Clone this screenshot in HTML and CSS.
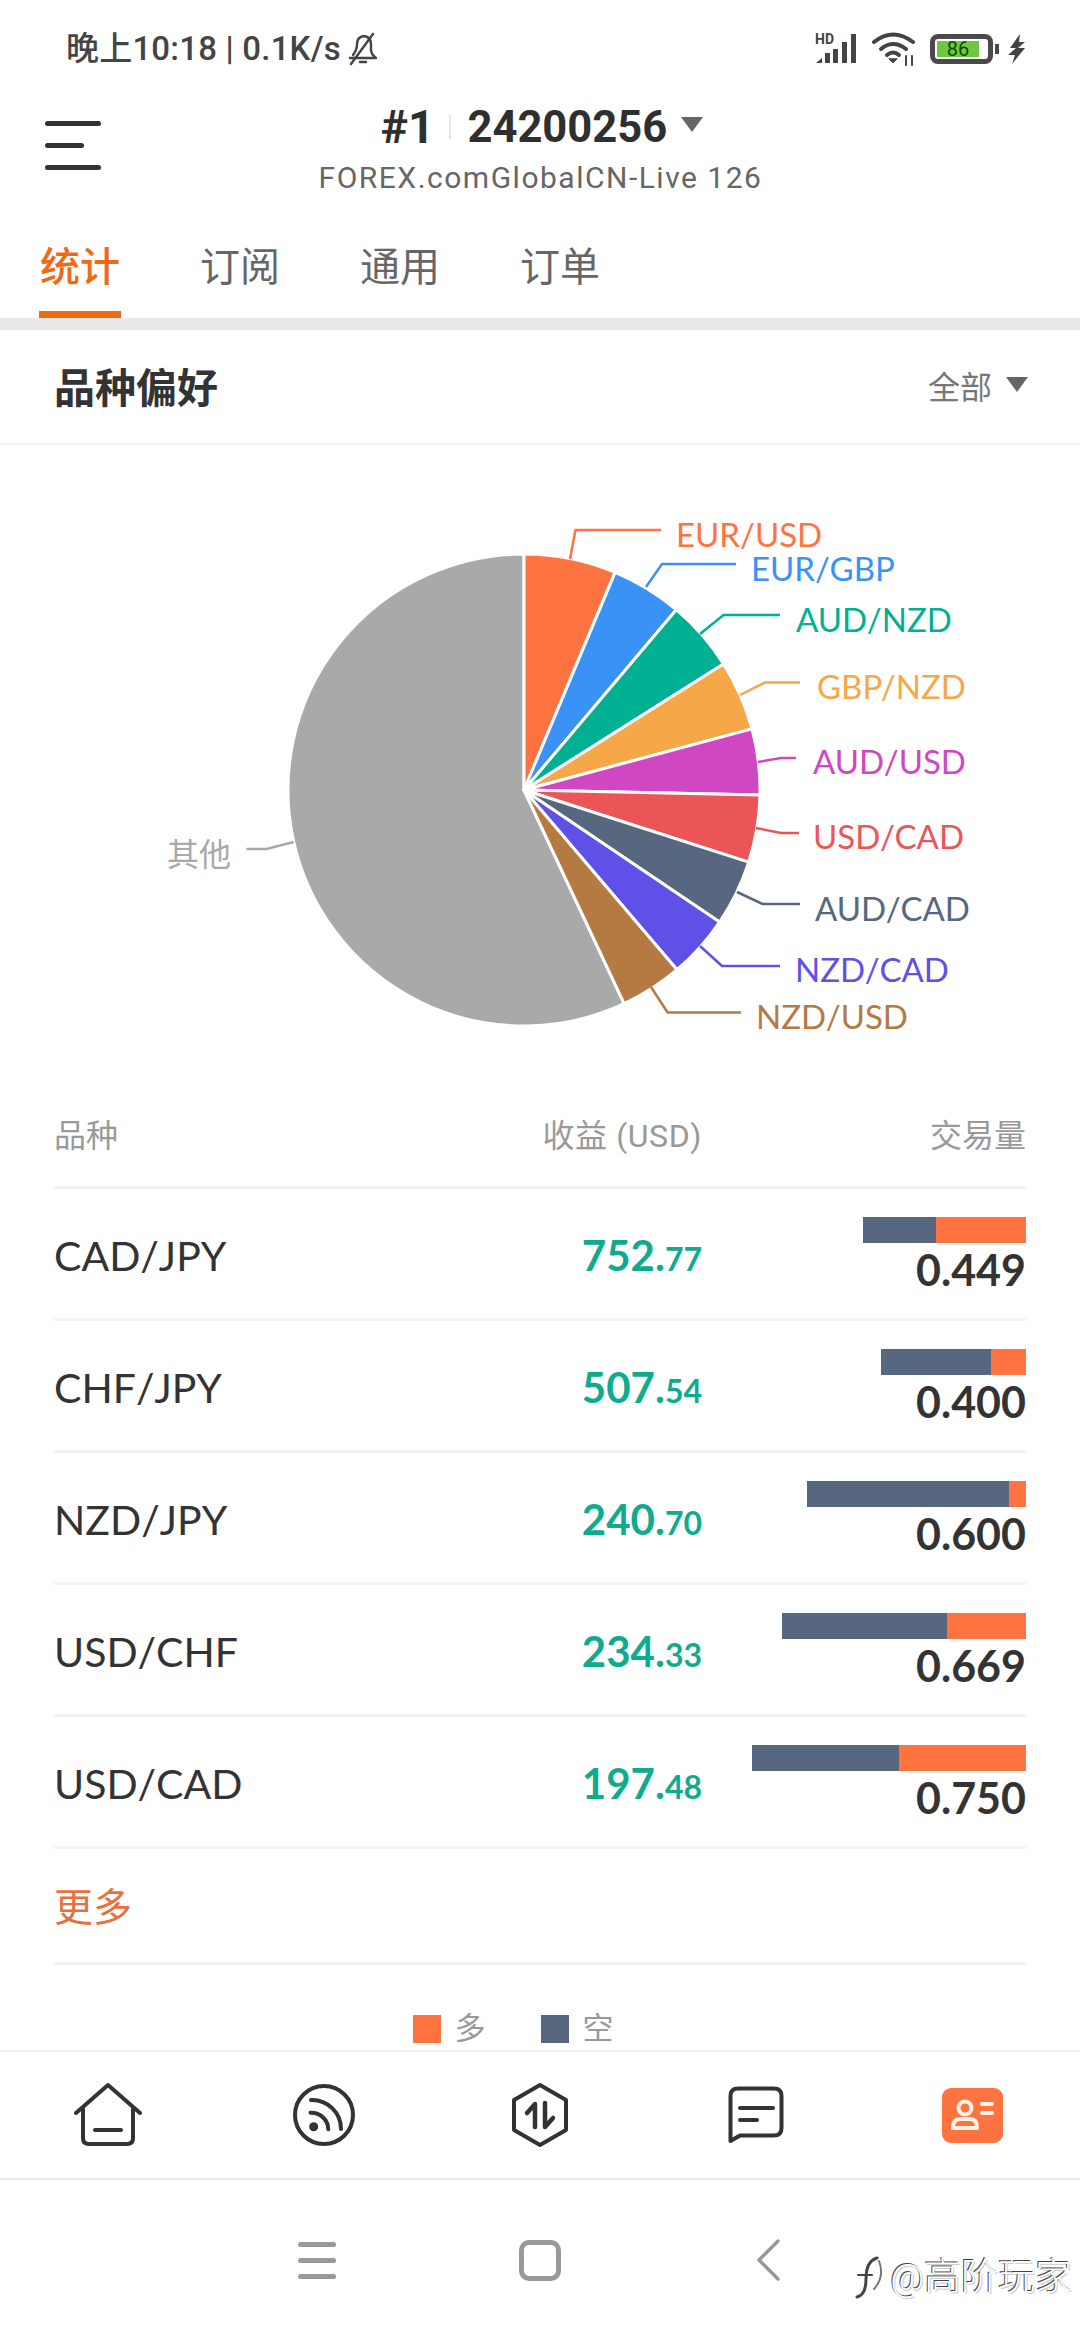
FILE: index.html
```html
<!DOCTYPE html>
<html lang="zh">
<head>
    <meta charset="UTF-8">
    <meta name="viewport" content="width=device-width, initial-scale=1.0">
    <title>品种偏好</title>
    <link rel="stylesheet" href="styles.css">
</head>
<body>
<div class="phone">
    <div class="status-bar">
        <div class="status-left">
            <span>晚上10:18 | 0.1K/s</span>
            <svg class="bell" viewBox="0 0 32 34" fill="none" stroke="#444" stroke-width="2.4" stroke-linecap="round" stroke-linejoin="round">
                <path d="M6 23 Q10 18 10 12 Q10 5 17 4 Q24 5 24 12 V18 Q24 22 29 26 H3"/>
                <path d="M13 30 H19"/>
                <path d="M26 2 L4 32"/>
            </svg>
        </div>
        <div class="status-right">
            <svg class="signal" viewBox="0 0 42 32">
                <text x="0" y="11" class="hd">HD</text>
                <path d="M1 30 L7 25 V30 Z M10 20 H15 V30 H10 Z M18 16 H23 V30 H18 Z M27 9 H32 V30 H27 Z M36 1 H41 V30 H36 Z" fill="#444"/>
            </svg>
            <svg class="wifi" viewBox="0 0 44 34" fill="none" stroke="#444" stroke-width="4" stroke-linecap="round">
                <path d="M2 10 Q21 -5 41 10"/>
                <path d="M9 17 Q21 7 34 17"/>
                <path d="M15 23 Q21 18 27 23"/>
                <path d="M17 27 L21 31 L25 27 Z" fill="#444" stroke-width="1"/>
                <path d="M34 24 V33 M40 24 V33" stroke-width="2"/>
            </svg>
            <div class="battery">
                <div class="battery-body"><span class="battery-fill">86</span></div>
                <div class="battery-nub"></div>
            </div>
            <svg class="bolt" viewBox="0 0 18 30">
                <path d="M12 0 L2 14 L8 14 L0 21 L7 21 L4 30 L17 14 L10 14 L17 8 L11 8 Z" fill="#444"/>
            </svg>
        </div>
    </div>

    <header class="top-bar">
        <div class="menu-btn"><span></span><span class="short"></span><span></span></div>
        <div class="account">
            <div class="account-line">
                <span class="account-rank">#1</span>
                <span class="account-sep"></span>
                <span class="account-no">24200256</span>
                <span class="caret caret-up"></span>
            </div>
            <div class="account-server">FOREX.comGlobalCN-Live 126</div>
        </div>
    </header>

    <nav class="tabs">
        <div class="tab active">统计</div>
        <div class="tab">订阅</div>
        <div class="tab">通用</div>
        <div class="tab">订单</div>
    </nav>
    <div class="band"></div>

    <main class="content">
        <div class="section-head">
            <h2>品种偏好</h2>
            <div class="filter">全部<span class="caret"></span></div>
        </div>

        <svg class="pie" viewBox="0 445 1080 635">
            <g stroke="#fff" stroke-width="3" stroke-linejoin="round">
                <path class="f-grey" d="M524 790 L624.1 1003.7 A236 236 0 1 1 524 554 Z"/>
                <path class="f-orange" d="M524 790 L524 554 A236 236 0 0 1 615.1 572.3 Z"/>
                <path class="f-blue" d="M524 790 L615.1 572.3 A236 236 0 0 1 676.3 609.7 Z"/>
                <path class="f-green" d="M524 790 L676.3 609.7 A236 236 0 0 1 723.5 663.9 Z"/>
                <path class="f-yellow" d="M524 790 L723.5 663.9 A236 236 0 0 1 752 728.9 Z"/>
                <path class="f-magenta" d="M524 790 L752 728.9 A236 236 0 0 1 760 794.9 Z"/>
                <path class="f-red" d="M524 790 L760 794.9 A236 236 0 0 1 748.7 862.1 Z"/>
                <path class="f-slate" d="M524 790 L748.7 862.1 A236 236 0 0 1 719.6 922 Z"/>
                <path class="f-purple" d="M524 790 L719.6 922 A236 236 0 0 1 677 969.7 Z"/>
                <path class="f-brown" d="M524 790 L677 969.7 A236 236 0 0 1 624.1 1003.7 Z"/>
            </g>
            <g fill="none" stroke-width="2.5">
                <path class="s-orange" d="M570 559 L575.5 530 H661"/>
                <path class="s-blue" d="M646 587 L662 564 H736"/>
                <path class="s-green" d="M700 634 L723.5 615 H780"/>
                <path class="s-yellow" d="M740 695 L765 682.5 H800"/>
                <path class="s-magenta" d="M758 762 L781 758 H796"/>
                <path class="s-red" d="M756 828 L781 833 H799"/>
                <path class="s-slate" d="M737 892 L762.5 904 H800"/>
                <path class="s-purple" d="M700 946 L722 966 H780"/>
                <path class="s-brown" d="M651 987 L667.6 1012.5 H741"/>
                <path class="s-grey" d="M293.6 842 L266.5 849 H246.5"/>
            </g>
            <g class="pie-labels">
                <text class="f-orange" x="676" y="547">EUR/USD</text>
                <text class="f-blue" x="751" y="581">EUR/GBP</text>
                <text class="f-green" x="796" y="632">AUD/NZD</text>
                <text class="f-yellow" x="817" y="699">GBP/NZD</text>
                <text class="f-magenta" x="813" y="774">AUD/USD</text>
                <text class="f-red" x="813" y="849">USD/CAD</text>
                <text class="f-slate" x="815" y="921">AUD/CAD</text>
                <text class="f-purple" x="795" y="982">NZD/CAD</text>
                <text class="f-brown" x="756" y="1029">NZD/USD</text>
                <text class="f-grey label-cjk" x="167" y="866">其他</text>
            </g>
        </svg>

        <div class="table">
            <div class="table-head">
                <div>品种</div>
                <div class="right head-profit">收益 (USD)</div>
                <div class="right">交易量</div>
            </div>
            <div class="row">
                <div class="symbol">CAD/JPY</div>
                <div class="profit">752.<small>77</small></div>
                <div class="volume">
                    <div class="bar" style="width:163px"><i style="width:73px"></i></div>
                    <b>0.449</b>
                </div>
            </div>
            <div class="row">
                <div class="symbol">CHF/JPY</div>
                <div class="profit">507.<small>54</small></div>
                <div class="volume">
                    <div class="bar" style="width:145px"><i style="width:110px"></i></div>
                    <b>0.400</b>
                </div>
            </div>
            <div class="row">
                <div class="symbol">NZD/JPY</div>
                <div class="profit">240.<small>70</small></div>
                <div class="volume">
                    <div class="bar" style="width:219px"><i style="width:202px"></i></div>
                    <b>0.600</b>
                </div>
            </div>
            <div class="row">
                <div class="symbol">USD/CHF</div>
                <div class="profit">234.<small>33</small></div>
                <div class="volume">
                    <div class="bar" style="width:244px"><i style="width:165px"></i></div>
                    <b>0.669</b>
                </div>
            </div>
            <div class="row">
                <div class="symbol">USD/CAD</div>
                <div class="profit">197.<small>48</small></div>
                <div class="volume">
                    <div class="bar" style="width:274px"><i style="width:147px"></i></div>
                    <b>0.750</b>
                </div>
            </div>
            <div class="more">更多</div>
        </div>

        <div class="legend">
            <span class="swatch long"></span><span>多</span>
            <span class="swatch short-side"></span><span>空</span>
        </div>
    </main>

    <nav class="tab-bar">
        <svg class="ico-home" viewBox="0 0 68 64" fill="none" stroke="#333" stroke-width="4" stroke-linecap="round" stroke-linejoin="round">
            <path d="M2 30 L34 2 L66 30"/>
            <path d="M9 25 V55 Q9 61 15 61 H53 Q59 61 59 55 V25"/>
            <path d="M21 47 H47"/>
        </svg>
        <svg class="ico-feed" viewBox="0 0 64 64" fill="none" stroke="#333" stroke-width="4" stroke-linecap="round">
            <circle cx="32" cy="32" r="29"/>
            <circle cx="21.7" cy="43.7" r="4.5" fill="#333" stroke="none"/>
            <path d="M18.5 29.7 A17 17 0 0 1 36.3 46.3"/>
            <path d="M19 17 A29 29 0 0 1 49 46"/>
        </svg>
        <svg class="ico-trade" viewBox="0 0 60 64" fill="none" stroke="#333" stroke-width="4" stroke-linecap="round" stroke-linejoin="round">
            <path d="M30 2 L56 17 V47 L30 62 L4 47 V17 Z"/>
            <path d="M25 44 V21 L17 30" stroke-width="4.5"/>
            <path d="M35 20 V44 L43 35" stroke-width="4.5"/>
        </svg>
        <svg class="ico-chat" viewBox="0 0 56 58" fill="none" stroke="#333" stroke-width="4" stroke-linecap="round" stroke-linejoin="round">
            <path d="M2.5 55 V10 Q2.5 2.5 10 2.5 H46 Q53.5 2.5 53.5 10 V42 Q53.5 49.5 46 49.5 H12 Z"/>
            <path d="M12 22 H45"/>
            <path d="M12 34 H29"/>
        </svg>
        <svg class="ico-me" viewBox="0 0 61 55">
            <rect width="61" height="55" rx="9" fill="#ff7340"/>
            <circle cx="23" cy="20" r="6.5" fill="none" stroke="#fff3e8" stroke-width="4"/>
            <path d="M11 40 Q11 31 18 31 H28 Q35 31 35 40 Z" fill="none" stroke="#fff3e8" stroke-width="4" stroke-linejoin="round"/>
            <path d="M40 16 H50 M40 25 H50" stroke="#fff3e8" stroke-width="4" stroke-linecap="round"/>
        </svg>
    </nav>

    <div class="sys-nav">
        <div class="sys-menu"><span></span><span></span><span></span></div>
        <div class="sys-home"></div>
        <svg class="sys-back" viewBox="0 0 24 42" fill="none" stroke="#999" stroke-width="3.5" stroke-linecap="round" stroke-linejoin="round">
            <path d="M22 2 L3 21 L22 40"/>
        </svg>
    </div>

    <div class="watermark">
        <svg class="wm-logo" viewBox="0 0 34 50" fill="none" stroke-linecap="round">
            <path d="M7 44 Q16 42 16 26 Q16 8 27 5" stroke="#444" stroke-width="3"/>
            <path d="M8 22 H22" stroke="#444" stroke-width="2"/>
            <path d="M29 8 Q35 24 24 36" stroke="#777" stroke-width="2"/>
        </svg>
        <span>@高阶玩家</span>
    </div>
</div>
</body>
</html>
```

FILE: styles.css
```css
* {
    box-sizing: border-box;
}
html, body {
    margin: 0;
    padding: 0;
    background: #fff;
}
body {
    font-family: "Roboto", "Noto Sans CJK SC", sans-serif;
    color: #333;
}
.phone {
    position: relative;
    width: 1080px;
    height: 2340px;
    overflow: hidden;
    display: flex;
    flex-direction: column;
}

/* status bar */
.status-bar {
    height: 75px;
    padding: 25px 54px 0 66px;
    display: flex;
    justify-content: space-between;
    align-items: flex-start;
}
.status-left {
    display: flex;
    align-items: center;
    gap: 6px;
    font-size: 33px;
    font-weight: 500;
    line-height: 48px;
    color: #444;
    letter-spacing: 0.2px;
}
.bell {
    width: 32px;
    height: 34px;
}
.status-right {
    display: flex;
    align-items: center;
    margin-top: 7px;
}
.signal {
    width: 42px;
    height: 32px;
    overflow: visible;
}
.hd {
    font-size: 14px;
    font-weight: 700;
    fill: #444;
}
.wifi {
    width: 44px;
    height: 34px;
    margin-left: 15px;
}
.battery {
    display: flex;
    align-items: center;
    margin-left: 14px;
}
.battery-body {
    width: 63px;
    height: 30px;
    border: 5px solid #4a4a4a;
    border-radius: 8px;
    padding: 2px;
}
.battery-fill {
    display: block;
    width: 42px;
    height: 16px;
    background: #6ec73f;
    color: #0d4a0d;
    font-size: 20px;
    line-height: 16px;
    text-align: center;
}
.battery-nub {
    width: 4px;
    height: 10px;
    margin-left: 2px;
    background: #4a4a4a;
}
.bolt {
    width: 18px;
    height: 30px;
    margin-left: 9px;
}

/* account header */
.top-bar {
    position: relative;
    height: 139px;
    display: flex;
    justify-content: center;
    padding-top: 26px;
}
.menu-btn {
    position: absolute;
    left: 45px;
    top: 46px;
    width: 56px;
    display: flex;
    flex-direction: column;
    gap: 17px;
}
.menu-btn span {
    height: 5px;
    border-radius: 3px;
    background: #333;
}
.menu-btn .short {
    width: 39px;
}
.account {
    display: flex;
    flex-direction: column;
    align-items: center;
    width: 500px;
    margin-left: 1px;
}
.account-line {
    display: flex;
    align-items: center;
    height: 52px;
    margin-left: 3px;
    font-size: 43.5px;
    font-weight: 700;
    color: #2f2f2f;
}
.account-rank {
    font-size: 46px;
}
.account-sep {
    width: 2px;
    height: 24px;
    margin: 0 16px 0 15px;
    background: #e6e6e6;
}
.account-server {
    margin-top: 6px;
    font-size: 30px;
    line-height: 38px;
    letter-spacing: 1.5px;
    color: #666;
}
.caret {
    display: inline-block;
    width: 0;
    height: 0;
    border-left: 11px solid transparent;
    border-right: 11px solid transparent;
    border-top: 15px solid #666;
}
.caret-up {
    margin: 0 0 6px 14px;
}

/* tabs */
.tabs {
    height: 104px;
    padding-left: 39px;
    display: flex;
    gap: 78px;
}
.tab {
    width: 82px;
    height: 104px;
    padding-top: 30px;
    font-size: 40px;
    line-height: 48px;
    text-align: center;
    color: #666;
}
.tab.active {
    color: #ef6a15;
    font-weight: 500;
    border-bottom: 7px solid #ef6a15;
}
.band {
    height: 12px;
    background: #e8e8e8;
}

/* content */
.content {
    flex: 1;
    min-height: 0;
    overflow: hidden;
    display: flex;
    flex-direction: column;
}
.section-head {
    height: 115px;
    padding: 0 52px 4px 54px;
    display: flex;
    justify-content: space-between;
    align-items: center;
    border-bottom: 2px solid #f2f2f2;
}
.section-head h2 {
    margin: 0;
    font-size: 41px;
    font-weight: 700;
    color: #333;
}
.filter {
    display: flex;
    align-items: center;
    font-size: 32px;
    color: #777;
}
.filter .caret {
    margin: 0 0 0 14px;
}

/* pie */
.pie {
    display: block;
    width: 1080px;
    height: 635px;
    flex: none;
}
.pie-labels {
    font-family: "Lato", "Noto Sans CJK SC", sans-serif;
    font-size: 33px;
}
.label-cjk {
    font-family: "Noto Sans CJK SC", sans-serif;
    font-size: 32px;
}
.f-orange { fill: #ff7340; }
.f-blue { fill: #3a92f7; }
.f-green { fill: #00b092; }
.f-yellow { fill: #f6a848; }
.f-magenta { fill: #cf47c3; }
.f-red { fill: #eb5557; }
.f-slate { fill: #56677f; }
.f-purple { fill: #5f50e8; }
.f-brown { fill: #b47a42; }
.f-grey { fill: #a9a9a9; }
.s-orange { stroke: #ff7340; }
.s-blue { stroke: #3a92f7; }
.s-green { stroke: #00b092; }
.s-yellow { stroke: #f6a848; }
.s-magenta { stroke: #cf47c3; }
.s-red { stroke: #eb5557; }
.s-slate { stroke: #56677f; }
.s-purple { stroke: #5f50e8; }
.s-brown { stroke: #b47a42; }
.s-grey { stroke: #a9a9a9; }

/* table */
.table {
    margin: 0 54px;
}
.table-head, .row {
    display: grid;
    grid-template-columns: 400px 248px 324px;
    border-bottom: 3px solid #f3f3f3;
}
.table-head {
    height: 109px;
    align-items: center;
    font-size: 32px;
    color: #999;
}
.right {
    text-align: right;
}
.head-profit {
    letter-spacing: 0.6px;
}
.row {
    height: 132px;
    align-items: center;
}
.symbol {
    padding-top: 3px;
    font-family: "Lato", sans-serif;
    font-size: 41px;
    font-kerning: none;
    color: #333;
}
.profit {
    padding-top: 3px;
    text-align: right;
    font-family: "Lato", sans-serif;
    font-size: 42px;
    font-weight: 700;
    color: #0fab8e;
}
.profit small {
    font-size: 32px;
}
.volume {
    display: flex;
    flex-direction: column;
    align-items: flex-end;
    align-self: start;
    padding-top: 28px;
}
.bar {
    height: 26px;
    background: #ff7340;
}
.bar i {
    display: block;
    height: 26px;
    background: #56677f;
}
.volume b {
    margin-top: 2px;
    font-family: "Lato", sans-serif;
    font-size: 43px;
    line-height: 50px;
    font-weight: 700;
    color: #333;
}
.more {
    height: 116px;
    line-height: 118px;
    font-size: 39px;
    color: #e8703f;
    border-bottom: 3px solid #f3f3f3;
}

/* legend */
.legend {
    display: flex;
    justify-content: center;
    align-items: center;
    margin: 48px 54px 0 0;
    font-size: 31px;
    line-height: 32px;
    color: #999;
}
.swatch {
    width: 28px;
    height: 28px;
    margin-right: 14px;
}
.swatch.long {
    background: #ff7340;
}
.swatch.short-side {
    margin-left: 55px;
    background: #56677f;
}

/* bottom tabs */
.tab-bar {
    height: 130px;
    flex: none;
    display: grid;
    grid-template-columns: repeat(5, 216px);
    justify-items: center;
    align-items: center;
    background: #fff;
    border-top: 2px solid #eee;
    border-bottom: 2px solid #e8e8e8;
}
.ico-home { width: 68px; height: 64px; }
.ico-feed { width: 64px; height: 64px; }
.ico-trade { width: 60px; height: 64px; }
.ico-chat { width: 56px; height: 58px; }
.ico-me { width: 61px; height: 55px; }

/* system nav */
.sys-nav {
    height: 160px;
    flex: none;
    padding-left: 298px;
    display: flex;
    align-items: center;
}
.sys-menu {
    width: 38px;
    display: flex;
    flex-direction: column;
    gap: 11px;
}
.sys-menu span {
    height: 5px;
    border-radius: 3px;
    background: #999;
}
.sys-home {
    width: 42px;
    height: 41px;
    margin-left: 183px;
    border: 5px solid #999;
    border-radius: 10px;
}
.sys-back {
    width: 24px;
    height: 42px;
    margin-left: 195px;
}

.watermark {
    position: absolute;
    right: 8px;
    top: 2245px;
    display: flex;
    align-items: center;
    gap: 6px;
    font-size: 37px;
    font-weight: 300;
    color: #fff;
    text-shadow: -1px -1px 0 #444, 1px 1px 0 #ccc;
}
.wm-logo {
    width: 34px;
    height: 50px;
    margin-top: 8px;
}
```
